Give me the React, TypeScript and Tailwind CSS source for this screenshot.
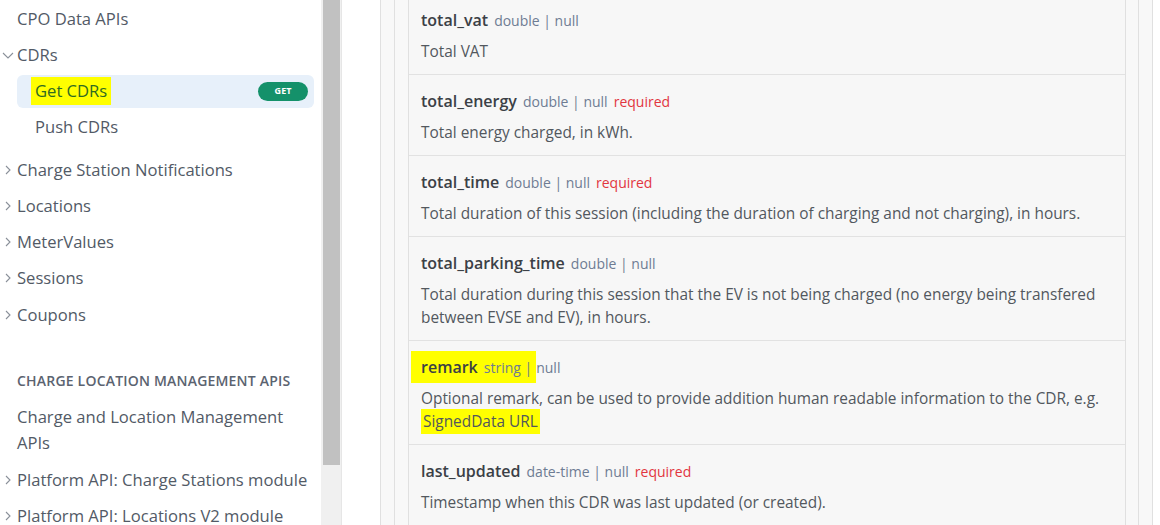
import type { ReactNode } from 'react';

const font = "font-['Segoe_UI','Open_Sans',sans-serif]";

function ChevronRight() {
  return (
    <svg width="14" height="14" viewBox="0 0 14 14" className="shrink-0">
      <polyline points="5,3 9,7 5,11" fill="none" stroke="#8a9099" strokeWidth="1.1" />
    </svg>
  );
}

function ChevronDown() {
  return (
    <svg width="14" height="14" viewBox="0 0 14 14" className="shrink-0">
      <polyline points="2,5 7,10 12,5" fill="none" stroke="#8a9099" strokeWidth="1.1" />
    </svg>
  );
}

function NavItem({ label, chevron }: { label: string; chevron?: 'right' | 'down' }) {
  return (
    <div className="flex h-[36px] items-center whitespace-nowrap text-[16.6px] text-[#525a66]">
      <div className="flex w-[17px] shrink-0 justify-start pl-[1px]">
        {chevron === 'right' && <ChevronRight />}
        {chevron === 'down' && <ChevronDown />}
      </div>
      <span>{label}</span>
    </div>
  );
}

type Field = {
  name: string;
  type: string;
  required?: boolean;
  desc: ReactNode;
};

const fields: Field[] = [
  { name: 'total_vat', type: 'double | null', desc: 'Total VAT' },
  { name: 'total_energy', type: 'double | null', required: true, desc: 'Total energy charged, in kWh.' },
  {
    name: 'total_time',
    type: 'double | null',
    required: true,
    desc: 'Total duration of this session (including the duration of charging and not charging), in hours.',
  },
  {
    name: 'total_parking_time',
    type: 'double | null',
    desc: 'Total duration during this session that the EV is not being charged (no energy being transfered between EVSE and EV), in hours.',
  },
  {
    name: 'remark',
    type: 'string | null',
    desc: (
      <>
        Optional remark, can be used to provide addition human readable information to the CDR, e.g.{' '}
        <span className="bg-[#ffff00] px-[2px] py-[2px]">SignedData URL</span>
      </>
    ),
  },
  {
    name: 'last_updated',
    type: 'date-time | null',
    required: true,
    desc: 'Timestamp when this CDR was last updated (or created).',
  },
];

function FieldRow({ f, last }: { f: Field; last: boolean }) {
  const isRemark = f.name === 'remark';
  return (
    <div
      className={
        'pb-[11px] pl-[12px] pr-[12px] pt-[14px] ' + (last ? 'h-[120px]' : 'border-b border-[#e2e2e2]')
      }
    >
      <div className="flex h-[24px] items-baseline gap-[6px] whitespace-nowrap">
        <span
          className={
            'text-[16px] font-semibold text-[#3b4046] ' +
            (isRemark ? '-my-[4px] -ml-[10px] bg-[#ffff00] py-[4px] pl-[10px] pr-[4px]' : '')
          }
        >
          {f.name}
          {isRemark && <span className="pl-[6px] text-[14px] font-normal text-[#6e7c93]">string |</span>}
        </span>
        {isRemark ? (
          <span className="-ml-[6px] text-[14px] text-[#6e7c93]">null</span>
        ) : (
          <span className="text-[14px] text-[#6e7c93]">{f.type}</span>
        )}
        {f.required && <span className="text-[14px] text-[#e2363f]">required</span>}
      </div>
      <div className="mt-[8px] text-[15.4px] leading-[23px] text-[#52585e]">{f.desc}</div>
    </div>
  );
}

export default function App() {
  return (
    <div className={`flex h-[525px] w-[1160px] overflow-hidden bg-white ${font}`}>
      {/* sidebar */}
      <div className="w-[321px] shrink-0 overflow-hidden pr-[7px]">
        <div className="mt-[1px]">
          <NavItem label="CPO Data APIs" />
          <NavItem label="CDRs" chevron="down" />
          <div className="ml-[17px] flex h-[36px] items-center">
            <div className="flex h-[33px] w-full items-center justify-between rounded-md bg-[#e7f0fa] pl-[14px] pr-[6px]">
              <span className="bg-[#ffff00] px-[4px] py-[2px] text-[16.6px] text-[#2f6b22]">Get CDRs</span>
              <span className="flex h-[19px] w-[50px] items-center justify-center rounded-full bg-[#14916a] text-[9px] font-bold text-white">
                GET
              </span>
            </div>
          </div>
          <div className="flex h-[36px] items-center pl-[35px] text-[16.6px] text-[#525a66]">Push CDRs</div>
          <div className="h-[7px]" />
          <NavItem label="Charge Station Notifications" chevron="right" />
          <NavItem label="Locations" chevron="right" />
          <NavItem label="MeterValues" chevron="right" />
          <NavItem label="Sessions" chevron="right" />
          <div className="h-[1px]" />
          <NavItem label="Coupons" chevron="right" />
          <div className="mt-[37px] flex h-[20px] items-center whitespace-nowrap pl-[17px] text-[14px] font-semibold tracking-[0.2px] text-[#5b6370]">
            CHARGE LOCATION MANAGEMENT APIS
          </div>
          <div className="mt-[14px] pl-[17px] text-[16.6px] leading-[26px] text-[#525a66]">
            Charge and Location Management
            <br />
            APIs
          </div>
          <div className="h-[6px]" />
          <NavItem label="Platform API: Charge Stations module" chevron="right" />
          <NavItem label="Platform API: Locations V2 module" chevron="right" />
        </div>
      </div>

      {/* scrollbar */}
      <div className="flex w-[21px] shrink-0 flex-col border-r border-[#e6e6e6] bg-[#f0f0f0] pl-[2px] pr-[1px]">
        <div className="h-[465px] w-[17px] bg-[#c1c1c1]" />
      </div>

      {/* main */}
      <div className="flex-1 overflow-hidden pl-[38px] pr-[7px]">
        <div className="h-full border-x border-[#e0e0e0] bg-[#f8f8f8] px-[13px]">
          <div className="h-full border-x border-[#e0e0e0] bg-[#f8f8f8] pl-[13px] pr-[12px]">
            <div className="h-full overflow-hidden border-x border-[#e0e0e0] bg-[#f7f7f7]">
              <div className="-mt-[6px]">
                {fields.map((f, i) => (
                  <FieldRow key={i} f={f} last={i === fields.length - 1} />
                ))}
              </div>
            </div>
          </div>
        </div>
      </div>
    </div>
  );
}
